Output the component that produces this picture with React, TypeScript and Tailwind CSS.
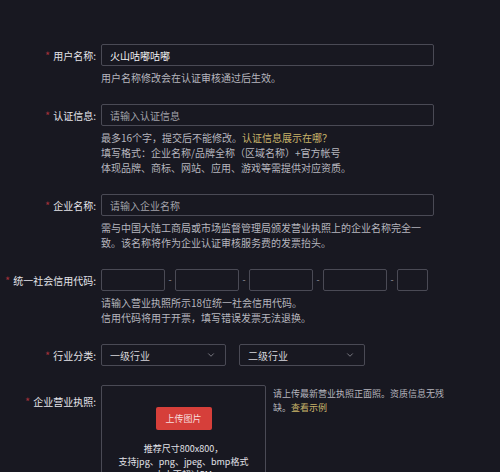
import { ChevronDown } from 'lucide-react';

const font = { fontFamily: '"Noto Sans CJK SC", "Noto Sans", sans-serif' };

const Label = ({ text, className = '' }: { text: string; className?: string }) => (
  <div className={`w-[96px] shrink-0 flex justify-end items-center h-[22px] text-[10px] text-[#e4e4ea] ${className}`}>
    <span className="text-[#a3303a] mr-[3px] text-[11px] leading-[11px]">*</span>
    <span>{text}</span>
  </div>
);

const Hint = ({ children }: { children: React.ReactNode }) => (
  <div className="mt-[4px] w-[324px] text-[10px] leading-[15px] text-[#b6b6be]">{children}</div>
);

const TextInput = ({ value, placeholder }: { value?: string; placeholder?: string }) => (
  <div className="w-[333px] h-[22px] border border-[#4a4a55] rounded-[2px] flex items-center px-[8px] text-[10px]">
    {value ? (
      <span className="text-[#f2f2f4]">{value}</span>
    ) : (
      <span className="text-[#a2a2aa]">{placeholder}</span>
    )}
  </div>
);

const Select = ({ text, width }: { text: string; width: string }) => (
  <div className={`${width} h-[22px] border border-[#4a4a55] rounded-[2px] flex items-center justify-between pl-[8px] pr-[9px] text-[10px] text-[#d6d6dc]`}>
    <span>{text}</span>
    <ChevronDown size={10} strokeWidth={1.5} className="text-[#b0b0b8]" />
  </div>
);

const CodeBox = ({ width }: { width: string }) => (
  <div className={`${width} h-[22px] border border-[#4a4a55] rounded-[2px]`} />
);

const Dash = () => (
  <span className="w-[10px] text-center text-[9px] text-[#9a9aa2] leading-[22px]">-</span>
);

export default function App() {
  return (
    <div className="w-[500px] h-[472px] overflow-hidden bg-[#181821] pt-[44px]" style={font}>
      <div className="flex flex-col gap-[19px]">
        <div className="flex gap-[5px]">
          <Label text="用户名称:" />
          <div>
            <TextInput value="火山咕嘟咕嘟" />
            <Hint>用户名称修改会在认证审核通过后生效。</Hint>
          </div>
        </div>

        <div className="flex gap-[5px]">
          <Label text="认证信息:" />
          <div>
            <TextInput placeholder="请输入认证信息" />
            <Hint>
              <p>
                最多16个字，提交后不能修改。<span className="text-[#c9b46a]">认证信息展示在哪？</span>
              </p>
              <p>填写格式：企业名称/品牌全称（区域名称）+官方帐号</p>
              <p>体现品牌、商标、网站、应用、游戏等需提供对应资质。</p>
            </Hint>
          </div>
        </div>

        <div className="flex gap-[5px]">
          <Label text="企业名称:" />
          <div>
            <TextInput placeholder="请输入企业名称" />
            <Hint>需与中国大陆工商局或市场监督管理局颁发营业执照上的企业名称完全一致。该名称将作为企业认证审核服务费的发票抬头。</Hint>
          </div>
        </div>

        <div className="flex gap-[5px]">
          <Label text="统一社会信用代码:" />
          <div>
            <div className="flex items-center">
              <CodeBox width="w-[64px]" />
              <Dash />
              <CodeBox width="w-[64px]" />
              <Dash />
              <CodeBox width="w-[64px]" />
              <Dash />
              <CodeBox width="w-[64px]" />
              <Dash />
              <CodeBox width="w-[31px]" />
            </div>
            <Hint>
              <p>请输入营业执照所示18位统一社会信用代码。</p>
              <p>信用代码将用于开票，填写错误发票无法退换。</p>
            </Hint>
          </div>
        </div>

        <div className="flex gap-[5px]">
          <Label text="行业分类:" />
          <div className="flex gap-[13px]">
            <Select text="一级行业" width="w-[125px]" />
            <Select text="二级行业" width="w-[126px]" />
          </div>
        </div>

        <div className="flex gap-[5px]">
          <Label text="企业营业执照:" className="mt-[5px]" />
          <div className="flex gap-[7px]">
            <div className="w-[165px] h-[120px] border border-[#4a4a55] rounded-[2px] flex flex-col items-center pt-[21px]">
              <div className="w-[56px] h-[23px] bg-[#d63f3a] rounded-[2px] flex items-center justify-center text-[9px] text-[#f6dede]">
                上传图片
              </div>
              <div className="mt-[12px] text-center text-[9px] leading-[13px] text-[#e2e2e8]">
                <p>推荐尺寸800x800，</p>
                <p>支持jpg、png、jpeg、bmp格式</p>
                <p>大小不超过5M</p>
              </div>
            </div>
            <div className="pt-[2px] text-[9px] leading-[14px] text-[#b6b6be]">
              <p>请上传最新营业执照正面照。资质信息无残</p>
              <p>
                缺。<span className="text-[#c9b46a]">查看示例</span>
              </p>
            </div>
          </div>
        </div>
      </div>
    </div>
  );
}
